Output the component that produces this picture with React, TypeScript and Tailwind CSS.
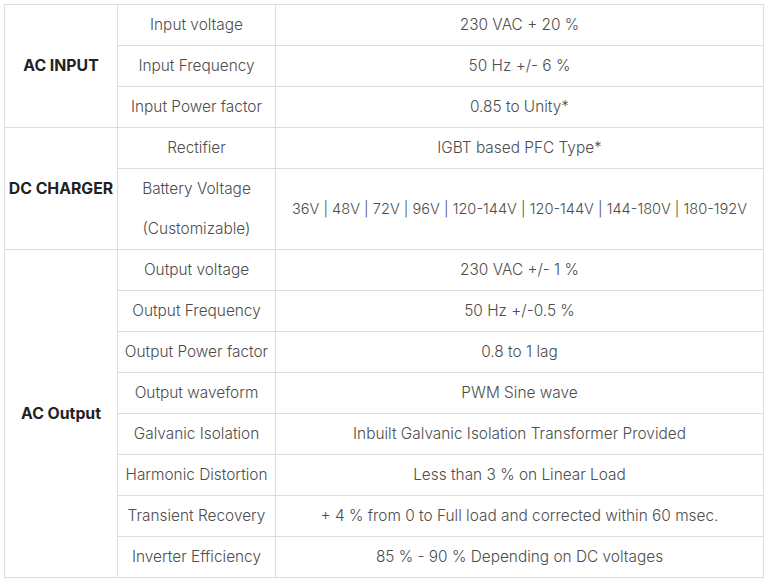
const sections: { title: string; rows: [string, string][] }[] = [
  {
    title: 'AC INPUT',
    rows: [
      ['Input voltage', '230 VAC + 20 %'],
      ['Input Frequency', '50 Hz +/- 6 %'],
      ['Input Power factor', '0.85 to Unity*'],
    ],
  },
  {
    title: 'DC CHARGER',
    rows: [
      ['Rectifier', 'IGBT based PFC Type*'],
      [
        'Battery Voltage\n(Customizable)',
        '36V | 48V | 72V | 96V | 120-144V | 120-144V | 144-180V | 180-192V',
      ],
    ],
  },
  {
    title: 'AC Output',
    rows: [
      ['Output voltage', '230 VAC +/- 1 %'],
      ['Output Frequency', '50 Hz +/-0.5 %'],
      ['Output Power factor', '0.8 to 1 lag'],
      ['Output waveform', 'PWM Sine wave'],
      ['Galvanic Isolation', 'Inbuilt Galvanic Isolation Transformer Provided'],
      ['Harmonic Distortion', 'Less than 3 % on Linear Load'],
      ['Transient Recovery', '+ 4 % from 0 to Full load and corrected within 60 msec.'],
      ['Inverter Efficiency', '85 % - 90 % Depending on DC voltages'],
    ],
  },
];

export default function App() {
  return (
    <div className="bg-white w-[768px] h-[583px] pt-[4px] pl-[4px] font-['Inter',sans-serif]">
      <table className="border-collapse table-fixed w-[760px] text-[15.4px] leading-[40px] text-[#4d4d4d] font-light">
        <colgroup>
          <col className="w-[113px]" />
          <col className="w-[158px]" />
          <col />
        </colgroup>
        <tbody>
          {sections.map((section) =>
            section.rows.map(([label, value], i) => (
              <tr key={section.title + label}>
                {i === 0 && (
                  <td
                    rowSpan={section.rows.length}
                    className="border border-[#dddddd] text-center text-[15.8px] font-bold text-[#222222] px-0 whitespace-nowrap"
                  >
                    {section.title}
                  </td>
                )}
                <td className="border border-[#dddddd] text-center whitespace-pre-line px-1">
                  {label}
                </td>
                <td
                  className={`border border-[#dddddd] text-center px-1 whitespace-nowrap ${
                    value.startsWith('36V') ? 'text-[14.6px]' : ''
                  }`}
                >
                  {value}
                </td>
              </tr>
            ))
          )}
        </tbody>
      </table>
    </div>
  );
}
